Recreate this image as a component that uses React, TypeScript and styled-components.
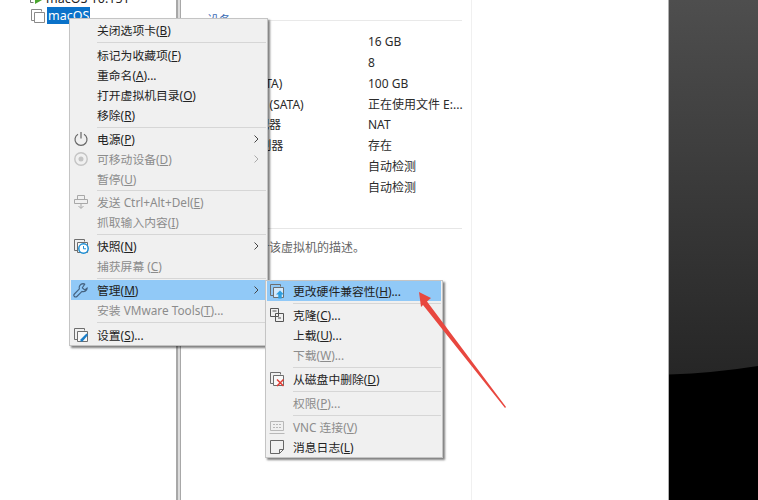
import React from "react";
import styled, { createGlobalStyle } from "styled-components";

const Global = createGlobalStyle`
  html, body { margin: 0; padding: 0; background: #fff; }
  body { font-family: "Noto Sans", "Noto Sans CJK SC", sans-serif; font-size: 12px; color: #2b2b2b; }
`;

const Page = styled.div`
  position: relative; width: 758px; height: 500px; overflow: hidden; display: flex; background: #fff;
`;
const Sidebar = styled.aside`
  width: 176px; flex: none; padding-left: 30px; box-sizing: border-box; margin-top: -10px;
`;
const TreeRow = styled.div`
  display: flex; align-items: center; height: 17px; gap: 1px; font-size: 12.5px; line-height: 17px;
`;
const TreeLabel = styled.span<{ $selected?: boolean }>`
  padding: 0 1px; color: ${p => (p.$selected ? "#fff" : "#222")}; background: ${p => (p.$selected ? "#0a72c9" : "transparent")};
`;
const Splitter = styled.div`
  width: 5px; flex: none; box-sizing: border-box; background: #dcdcdc; border-left: 2px solid #a8a8a8; border-right: 1px solid #a8a8a8;
`;
const Details = styled.main`
  width: 291px; flex: none; box-sizing: border-box; padding: 13px 9px 0 26px; border-right: 1px solid #f0f0f0;
`;
const SectionHead = styled.div`
  display: flex; align-items: center; gap: 6px; height: 15px; color: #3b6cb4; font-size: 12px; line-height: 15px;
`;
const HeadLine = styled.span`
  flex: 1; height: 1px; background: #e9e9e9;
`;
const SpecList = styled.div`
  display: grid; grid-template-columns: 147px 1fr; grid-auto-rows: 20.85px; margin: 4px 0 0 14px; line-height: 20.85px; white-space: nowrap;
`;
const Divider = styled.div`
  height: 1px; background: #e6e6e6; margin-top: 29px;
`;
const Desc = styled.p`
  margin: 11px 0 0 -10px; color: #666; line-height: 16px; white-space: nowrap;
`;
const Gap = styled.div`
  flex: 1;
`;
const Wallpaper = styled.div`
  width: 90px; flex: none; box-sizing: border-box; border-left: 1px solid #b0b0b0; background: #000;
  svg { display: block; }
`;
const Menu = styled.div<{ $left: number; $top: number; $width: number; $pad: number }>`
  position: absolute; left: ${p => p.$left}px; top: ${p => p.$top}px; width: ${p => p.$width}px;
  box-sizing: border-box; padding: ${p => p.$pad}px 1px 0; background: #f0f0f0; border: 1px solid #c4c4c4;
  box-shadow: 2px 2px 2px rgba(0, 0, 0, 0.5); font-size: 11.8px;
`;
const Item = styled.div<{ $disabled?: boolean; $active?: boolean }>`
  display: flex; align-items: center; height: 20px; white-space: nowrap;
  color: ${p => (p.$disabled ? "#8c8c8c" : "#222")};
  background: ${p => (p.$active ? "#91c9f7" : "transparent")};
  u { text-underline-offset: 1px; }
`;
const IconSlot = styled.span`
  width: 26px; flex: none; display: flex; justify-content: flex-start; align-items: center; height: 20px; padding-left: 2px; box-sizing: border-box;
`;
const ItemText = styled.span`
  flex: 1; line-height: 20px;
`;
const Chevron = styled.svg`
  flex: none; margin-right: 7px;
`;
const Sep = styled.div<{ $h: number; $inset: number }>`
  height: ${p => p.$h}px; display: flex; align-items: center; padding-left: ${p => p.$inset}px;
  &::after { content: ""; flex: 1; height: 1px; background: #d6d6d6; }
`;
const Arrow = styled.svg`
  position: absolute; left: 0; top: 0; pointer-events: none;
`;

const Stack = ({ c = "#6e6e6e", children }: { c?: string; children?: React.ReactNode }) => (
  <svg width="16" height="16" viewBox="0 0 16 16" fill="none">
    <path d="M4.5 12.5H1.5V1.5H11.5V3.5" stroke={c} />
    <path d="M4.5 4.5H14.5V14.5H4.5Z" stroke={c} fill="#fff" fillOpacity=".6" />
    {children}
  </svg>
);
const Power = () => (
  <svg width="16" height="16" viewBox="0 0 16 16" fill="none" stroke="#666" strokeWidth="1.2">
    <path d="M5 3.2A6 6 0 1 0 11 3.2" /><path d="M8 1V7.5" />
  </svg>
);
const Disc = () => (
  <svg width="16" height="16" viewBox="0 0 16 16" fill="none" stroke="#c4c4c4" strokeWidth="1.4">
    <circle cx="8" cy="8" r="6.2" /><circle cx="8" cy="8" r="1.8" fill="#c4c4c4" />
  </svg>
);
const SendKeys = () => (
  <svg width="16" height="16" viewBox="0 0 16 16" fill="none" stroke="#a8a8a8">
    <path d="M4.5 1.5H11.5V5.5H4.5ZM1.5 5.5H14.5V9.5H1.5ZM8 9.5V14M5.5 12L8 14.5L10.5 12" />
  </svg>
);
const Wrench = () => (
  <svg width="16" height="16" viewBox="0 0 16 16" fill="none" stroke="#44617f" strokeWidth="1.1" strokeLinejoin="round">
    <path d="M10 1.6A4 4 0 0 0 6.4 6.8L1.4 12A1.7 1.7 0 0 0 3.9 14.5L9 9.4A4 4 0 0 0 14.3 5.8L11.8 8L9.3 5.8L11.8 2.1A4 4 0 0 0 10 1.6Z" />
  </svg>
);
const Clone = () => (
  <svg width="16" height="16" viewBox="0 0 16 16" fill="none" stroke="#555">
    <path d="M1.5 1.5H9.5V9.5H1.5ZM6.5 6.5H14.5V14.5H6.5ZM3.5 4H7.5M9 11H12" />
  </svg>
);
const Vnc = () => (
  <svg width="16" height="16" viewBox="0 0 16 16" fill="none" stroke="#b8b8b8">
    <path d="M1.5 2.5H14.5V11.5H1.5ZM0.5 14.5H15.5M4 5.5H6M7 5.5H9M10 5.5H12M4 8.5H6M7 8.5H9M10 8.5H12" />
  </svg>
);
const Note = () => (
  <svg width="16" height="16" viewBox="0 0 16 16" fill="none" stroke="#666">
    <path d="M1.5 1.5H14.5V10.5L10.5 14.5H1.5ZM14.5 10.5H10.5V14.5" />
  </svg>
);
const icons: Record<string, React.ReactNode> = {
  power: <Power />,
  disc: <Disc />,
  send: <SendKeys />,
  snap: <Stack><circle cx="10.5" cy="10.5" r="4.7" fill="#fff" stroke="#1c8fd6" strokeWidth="1.5" /><path d="M10.5 8V10.8H13" stroke="#1c8fd6" /></Stack>,
  wrench: <Wrench />,
  set: <Stack><path d="M13.5 6.5L15 8L9.5 14.5H7.5V12.5Z" fill="#1c7fc9" /></Stack>,
  up: <Stack><path d="M11 7.5L15 11.5H12.7V15.5H9.3V11.5H7Z" fill="#2d9fe0" /></Stack>,
  clone: <Clone />,
  del: <Stack><path d="M8 8.5L14.5 15M14.5 8.5L8 15" stroke="#e23b33" strokeWidth="1.5" /></Stack>,
  vnc: <Vnc />,
  note: <Note />,
};

type Row =
  | { sep: number }
  | { t: string; k?: string; after?: string; icon?: string; dis?: boolean; active?: boolean; more?: boolean };

const mainRows: Row[] = [
  { t: "关闭选项卡(", k: "B", after: ")" },
  { sep: 5 },
  { t: "标记为收藏项(", k: "F", after: ")" },
  { t: "重命名(", k: "A", after: ")..." },
  { t: "打开虚拟机目录(", k: "O", after: ")" },
  { t: "移除(", k: "R", after: ")" },
  { sep: 4 },
  { t: "电源(", k: "P", after: ")", icon: "power", more: true },
  { t: "可移动设备(", k: "D", after: ")", icon: "disc", dis: true, more: true },
  { t: "暂停(", k: "U", after: ")", dis: true },
  { sep: 3 },
  { t: "发送 Ctrl+Alt+Del(", k: "E", after: ")", icon: "send", dis: true },
  { t: "抓取输入内容(", k: "I", after: ")", dis: true },
  { sep: 4 },
  { t: "快照(", k: "N", after: ")", icon: "snap", more: true },
  { t: "捕获屏幕 (", k: "C", after: ")", dis: true },
  { sep: 4 },
  { t: "管理(", k: "M", after: ")", icon: "wrench", active: true, more: true },
  { t: "安装 VMware Tools(", k: "T", after: ")...", dis: true },
  { sep: 5 },
  { t: "设置(", k: "S", after: ")...", icon: "set" },
];
const subRows: Row[] = [
  { t: "更改硬件兼容性(", k: "H", after: ")...", icon: "up", active: true },
  { sep: 4 },
  { t: "克隆(", k: "C", after: ")...", icon: "clone" },
  { t: "上载(", k: "U", after: ")..." },
  { t: "下载(", k: "W", after: ")...", dis: true },
  { sep: 4 },
  { t: "从磁盘中删除(", k: "D", after: ")", icon: "del" },
  { sep: 4 },
  { t: "权限(", k: "P", after: ")...", dis: true },
  { sep: 4 },
  { t: "VNC 连接(", k: "V", after: ")", icon: "vnc", dis: true },
  { t: "消息日志(", k: "L", after: ")", icon: "note" },
];

const MenuRows = ({ rows }: { rows: Row[] }) => (
  <>
    {rows.map((r, i) =>
      "sep" in r ? (
        <Sep key={i} $h={r.sep} $inset={26} />
      ) : (
        <Item key={i} $disabled={r.dis} $active={r.active}>
          <IconSlot>{r.icon ? icons[r.icon] : null}</IconSlot>
          <ItemText>{r.t}<u>{r.k}</u>{r.after}</ItemText>
          {r.more && (
            <Chevron width="5" height="8" viewBox="0 0 5 8" fill="none" stroke={r.dis ? "#aaa" : "#444"}>
              <path d="M0.5 0.5L4 4L0.5 7.5" />
            </Chevron>
          )}
        </Item>
      )
    )}
  </>
);

const specs: [string, string][] = [
  ["内存", "16 GB"],
  ["处理器", "8"],
  ["硬盘 (SATA)", "100 GB"],
  ["CD/DVD (SATA)", "正在使用文件 E:..."],
  ["网络适配器", "NAT"],
  ["USB 控制器", "存在"],
  ["声卡", "自动检测"],
  ["显示器", "自动检测"],
];

export default function App() {
  return (
    <Page>
      <Global />
      <Sidebar>
        <TreeRow>
          <svg width="14" height="14" viewBox="0 0 14 14" fill="none">
            <path d="M3.5 10.5H0.5V0.5H8" stroke="#777" />
            <path d="M5 3L13 7.5L5 12Z" fill="#4aa52e" />
          </svg>
          <TreeLabel>macOS 10.151</TreeLabel>
        </TreeRow>
        <TreeRow>
          <Stack c="#8a8a8a" />
          <TreeLabel $selected>macOS</TreeLabel>
        </TreeRow>
      </Sidebar>
      <Splitter />
      <Details>
        <SectionHead>设备<HeadLine /></SectionHead>
        <SpecList>
          {specs.map(([a, b]) => (
            <React.Fragment key={a}>
              <span>{a}</span>
              <span>{b}</span>
            </React.Fragment>
          ))}
        </SpecList>
        <Divider />
        <Desc>在此处键入对该虚拟机的描述。</Desc>
      </Details>
      <Gap />
      <Wallpaper>
        <svg width="89" height="500" viewBox="0 0 89 500">
          <defs>
            <linearGradient id="wall" x1="0" y1="0" x2="0" y2="1">
              <stop offset="0" stopColor="#4e4e4e" />
              <stop offset="1" stopColor="#262626" />
            </linearGradient>
          </defs>
          <path d="M0 0H89V366Q45 373 0 374.5Z" fill="url(#wall)" />
        </svg>
      </Wallpaper>
      <Menu $left={69} $top={18} $width={199} $pad={1}>
        <MenuRows rows={mainRows} />
      </Menu>
      <Menu $left={265} $top={280} $width={178} $pad={0}>
        <MenuRows rows={subRows} />
      </Menu>
      <Arrow width="758" height="500" viewBox="0 0 758 500">
        <path d="M419 292L431 298L427 301.5L506 407L505 408L423 305L421 307Z" fill="#e8473f" />
      </Arrow>
    </Page>
  );
}
